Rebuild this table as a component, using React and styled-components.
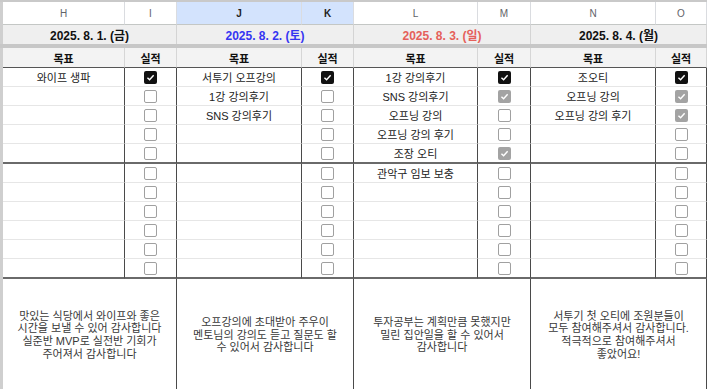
import styled, { createGlobalStyle } from "styled-components";

const COLS = "3px 122px 52px 125px 52px 124px 53px 125px 1fr";
const FONT = `"Liberation Sans", "Noto Sans CJK KR", sans-serif`;

const GlobalStyle = createGlobalStyle`
  html, body {
    margin: 0;
    background: #fff;
    font-family: ${FONT};
    overflow: hidden;
  }
`;

const days = [
  {
    date: "2025. 8. 1. (금)",
    color: "#111",
    goals: ["와이프 생파"],
    checks: ["on"],
    note: ["맛있는 식당에서 와이프와 좋은", "시간을 보낼 수 있어 감사합니다", "실준반 MVP로 실전반 기회가", "주어져서 감사합니다"],
  },
  {
    date: "2025. 8. 2. (토)",
    color: "#3535f2",
    goals: ["서투기 오프강의", "1강 강의후기", "SNS 강의후기"],
    checks: ["on"],
    note: ["오프강의에 초대받아 주우이", "멘토님의 강의도 듣고 질문도 할", "수 있어서 감사합니다"],
  },
  {
    date: "2025. 8. 3. (일)",
    color: "#e5605a",
    goals: ["1강 강의후기", "SNS 강의후기", "오프닝 강의", "오프닝 강의 후기", "조장 오티", "관악구 임보 보충"],
    checks: ["on", "dim", "off", "off", "dim"],
    note: ["투자공부는 계획만큼 못했지만", "밀린 집안일을 할 수 있어서", "감사합니다"],
  },
  {
    date: "2025. 8. 4. (월)",
    color: "#111",
    goals: ["조오티", "오프닝 강의", "오프닝 강의 후기"],
    checks: ["on", "dim", "dim"],
    note: ["서투기 첫 오티에 조원분들이", "모두 참여해주셔서 감사합니다.", "적극적으로 참여해주셔서", "좋았어요!"],
  },
];

const letters = ["H", "I", "J", "K", "L", "M", "N", "O"];

const Sheet = styled.div`
  width: 707px;
  border-top: 2px solid #c9c9c9;
  display: flex;
  flex-direction: column;
`;

const Row = styled.div`
  display: grid;
  grid-template-columns: ${COLS};
  height: ${(p) => p.$h}px;
  flex: none;
  box-sizing: border-box;
`;

const Strip = styled.div`
  background: #cfcfcf;
`;

const ColLetter = styled.div`
  display: flex;
  align-items: center;
  justify-content: center;
  font-size: 10px;
  color: ${(p) => (p.$selected ? "#1f1f1f" : "#5f6368")};
  font-weight: ${(p) => (p.$selected ? "bold" : "normal")};
  background: ${(p) => (p.$selected ? "#d3e3fd" : "#fff")};
  border-right: 1px solid #dadce0;
  border-bottom: 1px solid #c4c7c5;
`;

const DateCell = styled.div`
  grid-column: span 2;
  display: flex;
  align-items: center;
  justify-content: center;
  font-size: 12px;
  font-weight: bold;
  color: ${(p) => p.$color};
  background: #efefef;
  border-right: 1px solid #d4d4d4;
`;

const FreezeBar = styled.div`
  height: 4px;
  flex: none;
  background: #c7c7c7;
`;

const Label = styled.div`
  display: flex;
  align-items: center;
  justify-content: center;
  font-size: 11px;
  font-weight: bold;
  color: #111;
  background: #f3f3f3;
  border-right: 1px solid #d6d6d6;
  border-bottom: 1px solid #555;
`;

const Cell = styled.div`
  display: flex;
  align-items: center;
  justify-content: center;
  font-size: 11px;
  color: #222;
  border-right: 1px solid #4a4a4a;
  border-bottom: ${(p) => (p.$last ? "2px solid #6a6a6a" : "1px solid #e6e6e6")};
  white-space: nowrap;
  overflow: hidden;
`;

const Box = styled.span`
  width: 13px;
  height: 13px;
  box-sizing: border-box;
  border-radius: 2px;
  display: flex;
  align-items: center;
  justify-content: center;
  background: ${(p) => (p.$state === "on" ? "#111" : p.$state === "dim" ? "#a3a3a3" : "#fff")};
  border: ${(p) => (p.$state === "off" ? "1.5px solid #a0a0a0" : "none")};
`;

const Note = styled.div`
  grid-column: span 2;
  display: flex;
  flex-direction: column;
  align-items: center;
  justify-content: center;
  font-size: 11px;
  line-height: 12.7px;
  color: #383838;
  text-align: center;
  border-right: 1px solid #4a4a4a;
`;

const Check = ({ state }) => (
  <Box $state={state}>
    {state !== "off" && (
      <svg width="9" height="9" viewBox="0 0 10 10">
        <polyline points="1.6,5.2 4,7.5 8.5,2.6" fill="none" stroke="#fff" strokeWidth="1.6" />
      </svg>
    )}
  </Box>
);

const DataRow = ({ index, last }) => (
  <Row $h={last ? 20 : 19}>
    <Strip />
    {days.map((d, i) => [
      <Cell key={`g${i}`} $last={last}>{d.goals[index] || ""}</Cell>,
      <Cell key={`c${i}`} $last={last}>
        <Check state={d.checks[index] || "off"} />
      </Cell>,
    ])}
  </Row>
);

const App = () => {
  const rows = Array.from({ length: 11 }, (_, i) => i);
  return (
    <>
      <GlobalStyle />
      <Sheet>
        <Row $h={23}>
          <Strip />
          {letters.map((l) => (
            <ColLetter key={l} $selected={l === "J" || l === "K"}>{l}</ColLetter>
          ))}
        </Row>
        <Row $h={19}>
          <Strip />
          {days.map((d) => (
            <DateCell key={d.date} $color={d.color}>{d.date}</DateCell>
          ))}
        </Row>
        <FreezeBar />
        <Row $h={20}>
          <Strip />
          {days.map((d) => [
            <Label key={`${d.date}a`}>목표</Label>,
            <Label key={`${d.date}b`}>실적</Label>,
          ])}
        </Row>
        {rows.map((i) => (
          <DataRow key={i} index={i} last={i === 4 || i === 10} />
        ))}
        <Row $h={112}>
          <Strip />
          {days.map((d) => (
            <Note key={d.date}>
              {d.note.map((line) => (
                <div key={line}>{line}</div>
              ))}
            </Note>
          ))}
        </Row>
      </Sheet>
    </>
  );
};

export default App;
